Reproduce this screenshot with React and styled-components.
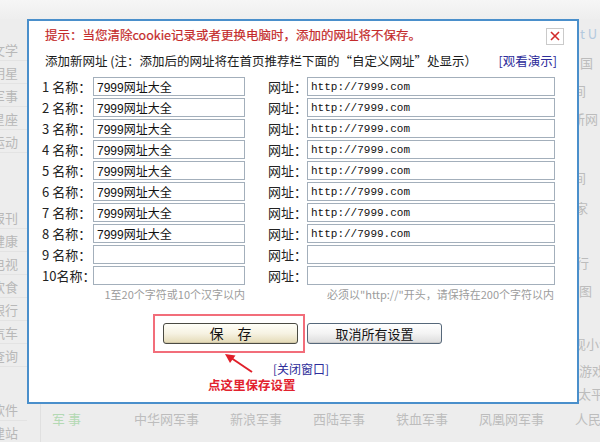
import React from "react";
import styled, { createGlobalStyle } from "styled-components";

const CJK = `"Noto Sans CJK SC", "Liberation Sans", sans-serif`;

const Global = createGlobalStyle`
  html, body { margin: 0; padding: 0; background: #ededed; }
  body { font-family: ${CJK}; }
`;

const Page = styled.div`
  display: grid;
  grid-template-columns: 27px 552px 21px;
  grid-template-rows: 19px 385px 38px;
  width: 600px;
  height: 442px;
  overflow: hidden;
  background: #ededed;
`;

const TopStrip = styled.div`
  grid-column: 1 / -1;
  grid-row: 1;
  background: linear-gradient(#f6f6f6, #eeeeee);
`;

/* faded page navigation on the left, mostly hidden behind the dialog */
const SideNav = styled.nav`
  grid-column: 1;
  grid-row: 2 / 4;
  display: flex;
  flex-direction: column;
  padding-top: 19px;
  overflow: hidden;
`;

const NavGroup = styled.div`
  display: flex;
  flex-direction: column;
  margin-top: ${(p) => p.$gap || 0}px;
`;

const SideItem = styled.div`
  height: 23px;
  box-sizing: border-box;
  display: flex;
  align-items: center;
  justify-content: flex-end;
  padding-right: 9px;
  border-bottom: 1px solid #e3e3e3;
  font-size: 13px;
  color: #b8b8b8;
  white-space: nowrap;
`;

const RightNav = styled.nav`
  grid-column: 3;
  grid-row: 2;
  display: flex;
  flex-direction: column;
  overflow: hidden;
`;

const RightItem = styled.div`
  height: ${(p) => p.$h}px;
  margin-top: ${(p) => p.$gap || 0}px;
  flex-shrink: 0;
  display: flex;
  align-items: center;
  font-size: 13px;
  color: ${(p) => p.$color || "#bcbcbc"};
  white-space: nowrap;
`;

const Shifted = styled.span`
  margin-left: ${(p) => p.$shift}px;
`;

const FooterLinks = styled.div`
  grid-column: 2 / -1;
  grid-row: 3;
  margin-left: 13px;
  border-left: 1px solid #e0e0e0;
  display: flex;
  align-items: flex-start;
  gap: 31px;
  padding: 6px 0 0 11px;
  font-size: 13px;
  line-height: 18px;
  color: #bdbdbd;
  white-space: nowrap;
  overflow: hidden;
`;

const FooterLink = styled.span`
  flex-shrink: 0;
  color: ${(p) => (p.$label ? "#b4d9b4" : "#bdbdbd")};
  margin-right: ${(p) => (p.$label ? 22 : 0)}px;
`;

/* dialog */
const Dialog = styled.section`
  grid-column: 2;
  grid-row: 2;
  box-sizing: border-box;
  border: 2px solid #4a8fcb;
  background: #fff;
  display: flex;
  flex-direction: column;
`;

const Header = styled.header`
  display: flex;
  align-items: center;
  justify-content: space-between;
  padding: 6px 13px 0 16px;
`;

const Notice = styled.h2`
  margin: 0;
  padding-bottom: 3px;
  font-size: 12.5px;
  font-weight: normal;
  line-height: 15px;
  color: #c42b2b;
  -webkit-text-stroke: 0.2px #c42b2b;
`;

const CloseBox = styled.button`
  box-sizing: border-box;
  width: 18px;
  height: 17px;
  margin: 0;
  padding: 0;
  border: 1px solid #cacaca;
  background: #fff;
  display: flex;
  align-items: center;
  justify-content: center;
`;

const Intro = styled.div`
  display: flex;
  justify-content: space-between;
  align-items: center;
  margin-top: 8px;
  padding: 0 20px 0 16px;
  font-size: 12.5px;
  line-height: 16px;
  color: #1a1a1a;
  white-space: nowrap;
`;

const Link = styled.a`
  color: #2d2d9a;
  text-decoration: none;
  cursor: pointer;
`;

const Fields = styled.div`
  display: grid;
  grid-template-columns: 51px 152px 62px 248px;
  grid-auto-rows: 19px;
  row-gap: 2px;
  margin-top: 8px;
  padding-left: 13px;
`;

const Label = styled.label`
  font-size: 13px;
  line-height: 19px;
  color: #222;
  white-space: pre;
  padding-left: ${(p) => p.$indent || 0}px;
`;

const Field = styled.input`
  box-sizing: border-box;
  width: 100%;
  height: 19px;
  margin: 0;
  padding: 0 3px;
  border: 1px solid #a3afbb;
  background: #fff;
  color: #111;
  outline: none;
  font-family: ${(p) =>
    p.$mono ? `"Liberation Mono", monospace` : `"Liberation Sans", "Noto Sans CJK SC", sans-serif`};
  font-size: ${(p) => (p.$mono ? 11 : 12)}px;
`;

const Hints = styled.div`
  display: grid;
  grid-template-columns: 203px 310px;
  margin-top: 2px;
  padding-left: 13px;
  font-size: 11px;
  line-height: 14px;
  color: #9c9c9c;
  white-space: nowrap;
`;

const Hint = styled.span`
  text-align: right;
  padding-right: ${(p) => p.$pad || 0}px;
`;

const Actions = styled.div`
  display: flex;
  align-items: center;
  margin-top: 13px;
  padding-left: 124px;
`;

const Highlight = styled.div`
  box-sizing: border-box;
  width: 152px;
  height: 39px;
  border: 2px solid #f26d7a;
  display: flex;
  align-items: center;
  padding-left: 8px;
`;

const Button = styled.button`
  box-sizing: border-box;
  width: 135px;
  height: 21px;
  margin: 0 0 0 ${(p) => (p.$tone === "cancel" ? 2 : 0)}px;
  padding: 0;
  border-radius: 3px;
  border: 1px solid ${(p) => (p.$tone === "save" ? "#4a4a42" : "#56687a")};
  background: ${(p) =>
    p.$tone === "save"
      ? "linear-gradient(#fffff8, #f6f2e2 50%, #e4dab6)"
      : "linear-gradient(#ffffff, #f3f3f3 50%, #dcdcdc)"};
  box-shadow: inset 0 -1px 0 rgba(0, 0, 0, 0.08);
  font-family: ${CJK};
  font-size: ${(p) => (p.$tone === "save" ? 14 : 13)}px;
  line-height: 19px;
  color: #111;
`;

const Annotation = styled.div`
  position: relative;
  margin-top: 9px;
  display: flex;
  flex-direction: column;
  font-size: 12px;
  line-height: 14px;
`;

const CloseLink = styled(Link)`
  padding-left: 244px;
`;

const Callout = styled.span`
  margin-top: 2px;
  padding-left: 179px;
  font-size: 12.5px;
  font-weight: bold;
  color: #e2222e;
`;

const Arrow = styled.svg`
  position: absolute;
  left: 190px;
  top: -13px;
`;

const leftGroups = [
  { gap: 0, items: ["中文文学", "影视明星", "中国军事", "十二星座", "体育运动"] },
  { gap: 53, items: ["电子报刊", "医疗健康", "网络电视", "美食饮食", "网上银行", "汽车", "在线查询"] },
  { gap: 31, items: ["常用软件", "网站建站"] },
];

const rightItems = [
  { h: 28, text: "t  U", shift: 1, color: "#b3c9de" },
  { h: 30, text: "国", shift: 1 },
  { h: 26, text: "间", shift: -6 },
  { h: 30, text: "新网", shift: -7 },
  { h: 24, gap: 32, text: "间", shift: -6 },
  { h: 36, text: "家", shift: -4 },
  { h: 28, gap: 23, text: "行", shift: -3 },
  { h: 28, text: "图", shift: 0 },
  { h: 26, gap: 26, text: "现小说", shift: -6 },
  { h: 28, text: "游戏", shift: 0 },
  { h: 18, text: "太平", shift: -1 },
];

const footerLinks = ["中华网军事", "新浪军事", "西陆军事", "铁血军事", "凤凰网军事", "人民网军事"];

const rows = Array.from({ length: 10 }, (_, i) => ({
  no: i + 1,
  name: i < 8 ? "7999网址大全" : "",
  url: i < 8 ? "http://7999.com" : "",
}));

export default function App() {
  return (
    <>
      <Global />
      <Page>
        <TopStrip />

        <SideNav>
          {leftGroups.map((g, gi) => (
            <NavGroup key={gi} $gap={g.gap}>
              {g.items.map((t) => (
                <SideItem key={t}>{t}</SideItem>
              ))}
            </NavGroup>
          ))}
        </SideNav>

        <Dialog>
          <Header>
            <Notice>提示：当您清除cookie记录或者更换电脑时，添加的网址将不保存。</Notice>
            <CloseBox aria-label="关闭">
              <svg width="10" height="10" viewBox="0 0 10 10">
                <path d="M1 1L9 9M9 1L1 9" stroke="#d22a2a" strokeWidth="1.6" fill="none" />
              </svg>
            </CloseBox>
          </Header>

          <Intro>
            <span>添加新网址 (注：添加后的网址将在首页推荐栏下面的“自定义网址”处显示）</span>
            <Link>[观看演示]</Link>
          </Intro>

          <Fields>
            {rows.map((r) => (
              <React.Fragment key={r.no}>
                <Label>{r.no < 10 ? `${r.no} 名称：` : `${r.no}名称：`}</Label>
                <Field readOnly value={r.name} />
                <Label $indent={23}>网址：</Label>
                <Field $mono readOnly value={r.url} />
              </React.Fragment>
            ))}
          </Fields>

          <Hints>
            <Hint>1至20个字符或10个汉字以内</Hint>
            <Hint $pad={1}>必须以"http://"开头，请保持在200个字符以内</Hint>
          </Hints>

          <Actions>
            <Highlight>
              <Button $tone="save">保　存</Button>
            </Highlight>
            <Button $tone="cancel">取消所有设置</Button>
          </Actions>

          <Annotation>
            <CloseLink>[关闭窗口]</CloseLink>
            <Callout>点这里保存设置</Callout>
            <Arrow width="40" height="28" viewBox="0 0 40 28">
              <path d="M13 9.5L33 23" stroke="#e0202a" strokeWidth="2" fill="none" />
              <path d="M6 5L16.5 6.5L11 14Z" fill="#e0202a" />
            </Arrow>
          </Annotation>
        </Dialog>

        <RightNav>
          {rightItems.map((it, i) => (
            <RightItem key={i} $h={it.h} $gap={it.gap} $color={it.color}>
              <Shifted $shift={it.shift}>{it.text}</Shifted>
            </RightItem>
          ))}
        </RightNav>

        <FooterLinks>
          <FooterLink $label>军 事</FooterLink>
          {footerLinks.map((t) => (
            <FooterLink key={t}>{t}</FooterLink>
          ))}
        </FooterLinks>
      </Page>
    </>
  );
}
